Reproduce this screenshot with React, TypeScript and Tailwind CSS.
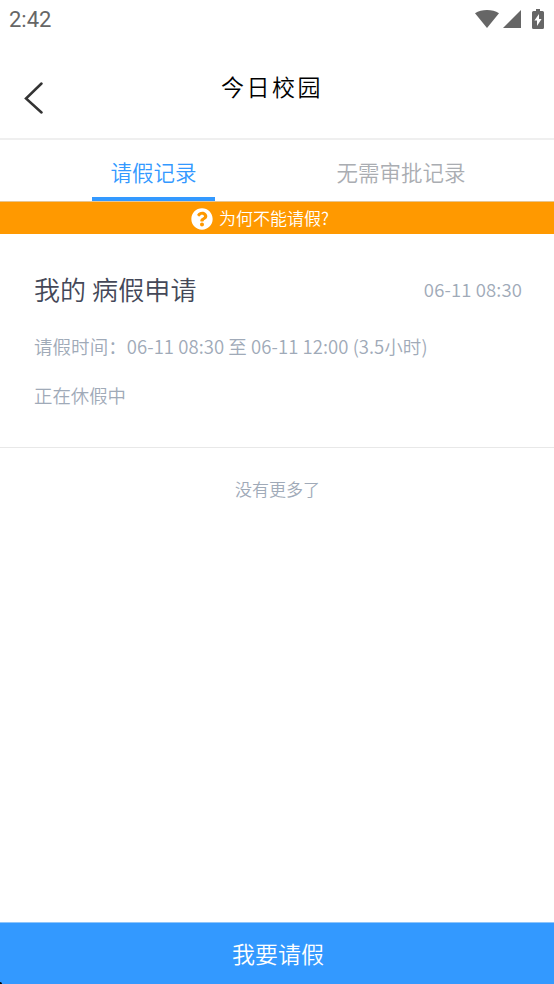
import React from 'react';
import { FaQuestionCircle } from 'react-icons/fa';

const records = [
  {
    title: '我的 病假申请',
    date: '06-11 08:30',
    range: '请假时间：06-11 08:30 至 06-11 12:00 (3.5小时)',
    status: '正在休假中',
  },
];

const StatusBar = () => (
  <div className="flex h-[38px] items-center justify-between pl-[9px] pr-[10px]">
    <span className="pt-px font-[Roboto] text-[22px] font-[450] leading-none text-[#666]">2:42</span>
    <div className="flex items-center text-[#666]">
      <svg width="24" height="19" viewBox="0 0 24 19" fill="currentColor">
        <path d="M12 18 0 3.2C3.4.8 7.6 0 12 0s8.6.8 12 3.2z" />
      </svg>
      <svg className="ml-[4px]" width="18" height="18" viewBox="0 0 18 18" fill="currentColor">
        <path d="M18 0v18H0z" />
      </svg>
      <svg className="ml-[11px]" width="12" height="20" viewBox="0 0 12 20">
        <path fill="currentColor" d="M4 0h4v2h2.5Q12 2 12 3.5v15q0 1.5-1.5 1.5h-9Q0 20 0 18.5v-15Q0 2 1.5 2H4z" />
        <path fill="#fff" d="M7 5v5h2.6L5 17v-5.500H2.4z" />
      </svg>
    </div>
  </div>
);

const App: React.FC = () => (
  <div className="relative flex h-[984px] w-[554px] flex-col overflow-hidden bg-white font-['Noto_Sans_CJK_SC',sans-serif] font-[350]">
    <StatusBar />
    <header className="flex h-[102px] items-start border-b-2 border-[#efefef]">
      <svg className="ml-[24px] mt-[44px]" width="20" height="32" viewBox="0 0 20 32" fill="none" stroke="#333" strokeWidth="2.5" strokeLinecap="round">
        <path d="M17.5 1.5 2 16.5l15.5 14" />
      </svg>
      <h1 className="mt-[31px] flex-1 pr-[54px] text-center text-[23px] leading-[34px] tracking-[2.5px] text-black">今日校园</h1>
    </header>

    <nav className="flex h-[61px] text-[21.5px] leading-[64px]">
      <div className="flex flex-1 justify-center pl-[29px]">
        <span className="h-[61px] w-[123px] border-b-4 border-[#3399ff] pl-px text-center text-[#3399ff]">请假记录</span>
      </div>
      <div className="flex-1 border-b border-transparent pr-[29px] text-center text-[#aaadb2]">无需审批记录</div>
    </nav>

    <div className="flex h-[33px] items-center border-t border-[#e6c590] bg-[#ff9900] pl-[191px] text-white">
      <FaQuestionCircle className="mr-[6px] mt-[2px] size-[22px]" />
      <span className="text-[17px]">为何不能请假?</span>
    </div>

    {records.map((r) => (
      <section key={r.range} className="h-[214px] border-b border-[#e8e8e8] px-[34px] pt-[34px] text-[#a0aab8]">
        <div className="flex h-[44px] items-center justify-between">
          <h2 className="-mt-[3px] text-[26px] tracking-[0.1px] text-[#444858]">{r.title}</h2>
          <span className="-mr-[2px] text-[18.5px] tracking-[0.13px]">{r.date}</span>
        </div>
        <p className="mt-[20px] text-[18.5px] leading-[28px] tracking-[0.06px]">{r.range}</p>
        <p className="mt-[21px] text-[18.4px] leading-[28px]">{r.status}</p>
      </section>
    ))}

    <p className="mt-[28px] pl-px text-center text-[17px] leading-[26px] text-[#a0aab8]">没有更多了</p>

    <button className="mt-auto h-[62px] border-t border-[#8ec5fb] bg-[#3399ff] pl-[2px] text-[23px] text-white">我要请假</button>
    <span className="absolute bottom-0 left-0 size-[2px] rounded-tr-full bg-black" />
  </div>
);

export default App;
